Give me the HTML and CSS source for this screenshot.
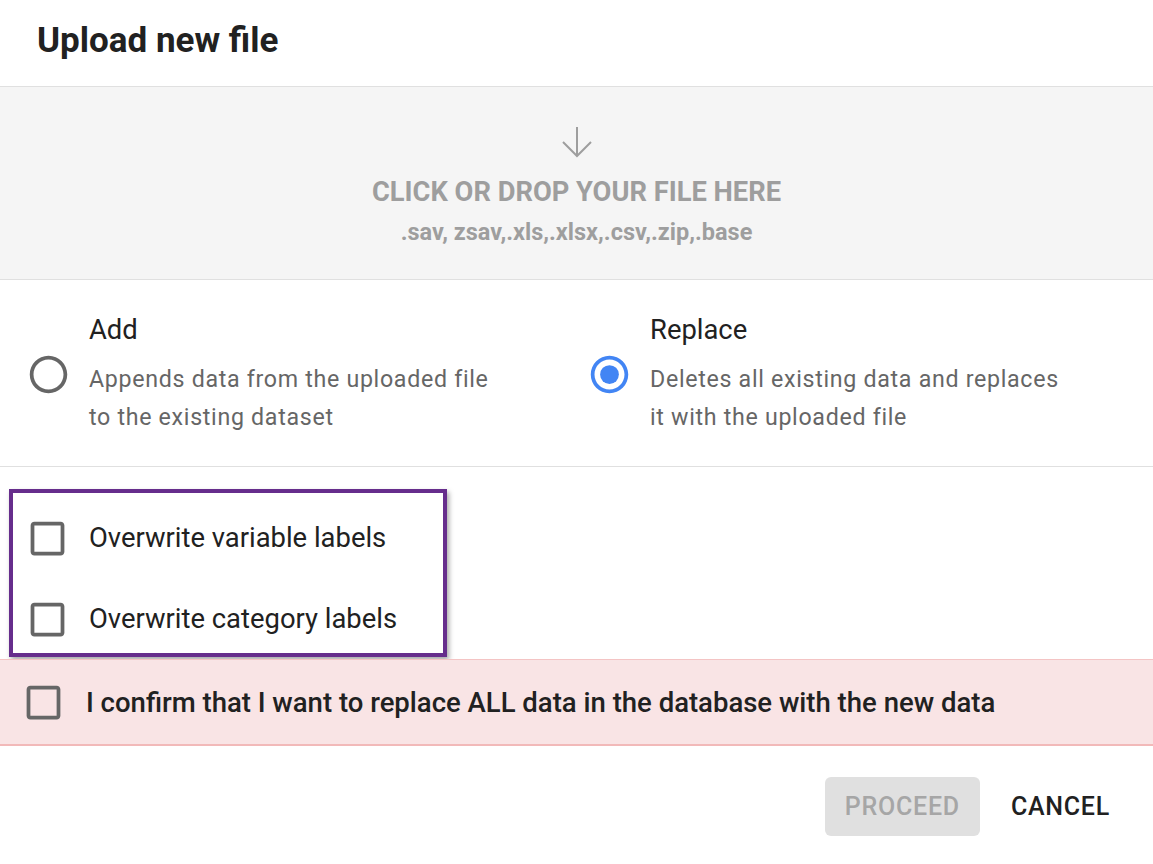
FILE: index.html
```html
<!DOCTYPE html>
<html lang="en">
<head>
    <meta charset="UTF-8">
    <meta name="viewport" content="width=device-width, initial-scale=1.0">
    <title>Upload new file</title>
    <link rel="stylesheet" href="styles.css">
</head>
<body>
    <div class="dialog">
        <h2 class="dialog-title">Upload new file</h2>

        <div class="dropzone" id="dropzone">
            <svg class="drop-icon" width="32" height="32" viewBox="0 0 32 32">
                <path d="M16 1 V30 M2 16 L16 30 L30 16" fill="none" stroke="#9e9e9e" stroke-width="2"/>
            </svg>
            <div class="drop-title">CLICK OR DROP YOUR FILE HERE</div>
            <div class="drop-types">.sav, zsav,.xls,.xlsx,.csv,.zip,.base</div>
        </div>

        <div class="options">
            <label class="option">
                <span class="radio">
                    <svg viewBox="0 0 24 24" width="45" height="45">
                        <path fill="#666" d="M12 2C6.48 2 2 6.48 2 12s4.48 10 10 10 10-4.48 10-10S17.52 2 12 2zm0 18c-4.42 0-8-3.58-8-8s3.58-8 8-8 8 3.58 8 8-3.58 8-8 8z"/>
                    </svg>
                </span>
                <span class="option-text">
                    <span class="option-title">Add</span>
                    <span class="option-desc">Appends data from the uploaded file<br>to the existing dataset</span>
                </span>
            </label>
            <label class="option">
                <span class="radio">
                    <svg viewBox="0 0 24 24" width="45" height="45">
                        <path fill="#4285f4" d="M12 2C6.48 2 2 6.48 2 12s4.48 10 10 10 10-4.48 10-10S17.52 2 12 2zm0 18c-4.42 0-8-3.58-8-8s3.58-8 8-8 8 3.58 8 8-3.58 8-8 8z"/>
                        <circle cx="12" cy="12" r="5" fill="#4285f4"/>
                    </svg>
                </span>
                <span class="option-text">
                    <span class="option-title">Replace</span>
                    <span class="option-desc">Deletes all existing data and replaces<br>it with the uploaded file</span>
                </span>
            </label>
        </div>

        <div class="label-options">
            <div class="label-box">
                <label class="check-row">
                    <svg class="check" viewBox="0 0 24 24" width="45" height="45">
                        <path fill="#666" d="M19 5v14H5V5h14m0-2H5c-1.1 0-2 .9-2 2v14c0 1.1.9 2 2 2h14c1.1 0 2-.9 2-2V5c0-1.1-.9-2-2-2z"/>
                    </svg>
                    <span>Overwrite variable labels</span>
                </label>
                <label class="check-row">
                    <svg class="check" viewBox="0 0 24 24" width="45" height="45">
                        <path fill="#666" d="M19 5v14H5V5h14m0-2H5c-1.1 0-2 .9-2 2v14c0 1.1.9 2 2 2h14c1.1 0 2-.9 2-2V5c0-1.1-.9-2-2-2z"/>
                    </svg>
                    <span>Overwrite category labels</span>
                </label>
            </div>
        </div>

        <label class="confirm">
            <svg class="check" viewBox="0 0 24 24" width="45" height="45">
                <path fill="#666" d="M19 5v14H5V5h14m0-2H5c-1.1 0-2 .9-2 2v14c0 1.1.9 2 2 2h14c1.1 0 2-.9 2-2V5c0-1.1-.9-2-2-2z"/>
            </svg>
            <span>I confirm that I want to replace ALL data in the database with the new data</span>
        </label>

        <div class="actions">
            <button type="button" class="btn btn-proceed" disabled>PROCEED</button>
            <button type="button" class="btn btn-cancel">CANCEL</button>
        </div>
    </div>
</body>
</html>
```

FILE: styles.css
```css
body {
    margin: 0;
    padding: 0;
    font-family: Roboto, "Liberation Sans", sans-serif;
    background-color: white;
    color: #212121;
}

.dialog {
    width: 100%;
    min-height: 864px;
    background: white;
}

.dialog-title {
    margin: 0;
    padding: 21px 37px 25px;
    font-size: 35px;
    line-height: 40px;
    font-weight: 700;
    color: #212121;
}

.dropzone {
    height: 192px;
    background: #f5f5f5;
    border-top: 1px solid #e0e0e0;
    border-bottom: 1px solid #e0e0e0;
    display: flex;
    flex-direction: column;
    align-items: center;
    box-sizing: content-box;
    cursor: pointer;
}

.drop-icon {
    margin-top: 39px;
}

.drop-title {
    margin-top: 18px;
    font-size: 27.3px;
    line-height: 32px;
    font-weight: 700;
    color: #9e9e9e;
}

.drop-types {
    margin-top: 10px;
    font-size: 23.5px;
    line-height: 28px;
    font-weight: 700;
    color: #9e9e9e;
}

.options {
    display: grid;
    grid-template-columns: 561px 1fr;
    padding: 32px 26px 30px;
    border-bottom: 1px solid #e0e0e0;
}

.option {
    display: flex;
    align-items: center;
    gap: 18px;
    cursor: pointer;
}

.radio svg {
    display: block;
}

.option-text {
    display: flex;
    flex-direction: column;
}

.option-title {
    font-size: 27.4px;
    line-height: 36px;
    margin-bottom: 12px;
    color: #212121;
}

.option-desc {
    font-size: 23.2px;
    line-height: 38px;
    letter-spacing: 0.03em;
    color: #666;
}

.label-options {
    padding: 22px 0 2px 9px;
}

.label-box {
    width: 418px;
    border: 4px solid #662d8c;
    box-shadow: 2px 3px 5px rgba(0, 0, 0, 0.35);
    padding: 15px 0 4px 12px;
    display: flex;
    flex-direction: column;
    gap: 21px;
}

.check-row {
    display: flex;
    align-items: center;
    gap: 19px;
    height: 60px;
    font-size: 27.4px;
    color: #212121;
    cursor: pointer;
}

.check {
    display: block;
    flex-shrink: 0;
}

.confirm {
    display: flex;
    align-items: center;
    gap: 20px;
    height: 84px;
    padding-left: 21px;
    background: #f9e4e5;
    border-top: 1px solid #f4c4c4;
    border-bottom: 2px solid #f2b9b9;
    font-size: 27.5px;
    font-weight: 500;
    color: #212121;
    cursor: pointer;
}

.actions {
    display: flex;
    justify-content: flex-end;
    align-items: center;
    gap: 11px;
    padding: 31px 23px 0 0;
}

.btn {
    height: 59px;
    padding: 0 20px;
    border: none;
    border-radius: 6px;
    font-family: Roboto, "Liberation Sans", sans-serif;
    font-size: 25px;
    font-weight: 500;
    letter-spacing: 0.03em;
    background: transparent;
    cursor: pointer;
}

.btn-proceed {
    background: #e0e0e0;
    color: #a6a6a6;
    cursor: default;
}

.btn-cancel {
    color: #212121;
}
```
